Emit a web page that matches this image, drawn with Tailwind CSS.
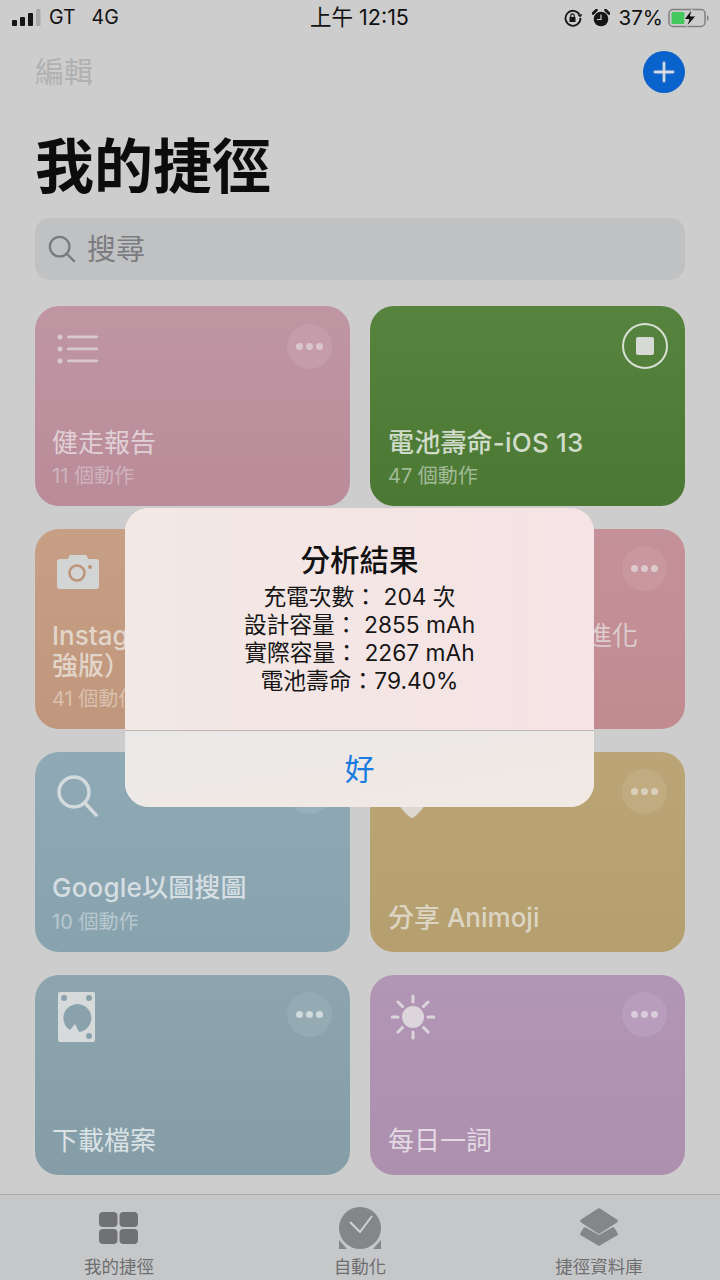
<!DOCTYPE html>
<html lang="zh-Hant">
<head>
<meta charset="utf-8">
<script src="https://cdn.jsdelivr.net/npm/@tailwindcss/browser@4"></script>
</head>
<body class="m-0">
<div class="relative w-[720px] h-[1280px] overflow-hidden bg-[#cdcdcd] font-['Inter','Noto_Sans_CJK_TC',sans-serif]">

  <!-- status bar -->
  <div class="h-[36px] grid grid-cols-3 items-center pl-[11px] pr-[10px] text-[#111] text-[19.5px] leading-none">
    <div class="flex items-center">
      <svg width="30" height="20" viewBox="0 0 30 20" fill="#151515"><rect x="1" y="12" width="5" height="6" rx="1"/><rect x="9" y="9" width="5" height="9" rx="1"/><rect x="17" y="5" width="5" height="13" rx="1"/><rect x="25" y="1" width="4.500" height="17" rx="1" fill="#a9a9a9"/></svg>
      <span class="ml-[8px]">GT</span><span class="ml-[16px]">4G</span>
    </div>
    <div class="text-center text-[21.5px] -translate-x-[1px]">上午 12:15</div>
    <div class="flex items-center justify-end">
      <svg width="19" height="18" viewBox="0 0 19 18" fill="none" stroke="#151515"><path d="M15.500 5.500A7.500 7.500 0 1 0 16.500 9" stroke-width="1.800"/><path d="M13.500 5.500h5l-2.500 3z" fill="#151515" stroke="none"/><rect x="5.500" y="8" width="6" height="5" fill="#151515" stroke="none"/><path d="M6.800 8V6.500a1.700 1.700 0 0 1 3.400 0V8" stroke-width="1.200"/></svg>
      <svg class="ml-[9px]" width="18" height="18" viewBox="0 0 18 18" fill="#151515"><circle cx="9" cy="10" r="7.300"/><path d="M1 4.500 4.500 1M13.500 1 17 4.500" stroke="#151515" stroke-width="2.600" stroke-linecap="round"/><path d="M9 5.500V10.500H5" stroke="#cdcdcd" stroke-width="1.200" fill="none"/></svg>
      <span class="ml-[9px] text-[20.5px]">37%</span>
      <svg class="ml-[5px]" width="42" height="20" viewBox="0 0 42 20" fill="none"><rect x="1" y="1.500" width="36" height="17" rx="4" stroke="#808080" stroke-width="1.500"/><rect x="3.500" y="4" width="13" height="12" rx="1.500" fill="#42c85c"/><path d="M39 7v6a3 3 0 0 0 1.500-3A3 3 0 0 0 39 7z" fill="#808080"/><path d="M24 1 16 11.500h5L18.500 19 28 8h-5.500z" fill="#111" stroke="#cdcdcd" stroke-width="1"/></svg>
    </div>
  </div>

  <!-- nav -->
  <div class="h-[72px] px-[35px] flex items-center justify-between">
    <span class="text-[29px] leading-none text-[#b1b1b1]">編輯</span>
    <div class="w-[42px] h-[42px] rounded-full bg-[#0a62cc] flex items-center justify-center">
      <svg width="22" height="22" viewBox="0 0 22 22" stroke="#d5d8dc" stroke-width="2.800" stroke-linecap="round"><path d="M11 2v18M2 11h18"/></svg>
    </div>
  </div>

  <!-- title -->
  <h1 class="mt-[24px] px-[35px] h-[70px] text-[59px] leading-[70px] font-bold text-[#0c0c0c]">我的捷徑</h1>

  <!-- search -->
  <div class="mx-[35px] mt-[16px] h-[62px] rounded-[15px] bg-[#c0c1c3] flex items-center pl-[13px]">
    <svg width="28" height="28" viewBox="0 0 30 30" fill="none" stroke="#7a7b7e" stroke-width="2.400" stroke-linecap="round"><circle cx="12.500" cy="12.500" r="10.500"/><path d="M20.500 20.500 28 28"/></svg>
    <span class="ml-[11px] text-[29px] text-[#7b7c7f] leading-none">搜尋</span>
  </div>

  <!-- grid -->
  <div class="mt-[26px] mx-[35px] grid grid-cols-[315px_315px] gap-x-[20px] gap-y-[23px]">

    <!-- card 1 -->
    <div class="relative h-[200px] rounded-[24px] bg-linear-to-b from-[#c096a3] to-[#ba8b99] pl-[22px] pt-[27px] text-[#e0d0d5]">
      <svg class="block" width="42" height="32" viewBox="0 0 42 32" fill="#d8c9ce"><circle cx="3" cy="4" r="2.500"/><circle cx="3" cy="16" r="2.500"/><circle cx="3" cy="28" r="2.500"/><rect x="10" y="2.500" width="31" height="2.800" rx="1.400"/><rect x="10" y="14.500" width="31" height="2.800" rx="1.400"/><rect x="10" y="26.500" width="31" height="2.800" rx="1.400"/></svg>
      <div class="absolute right-[18px] top-[18px] w-[45px] h-[45px] rounded-full bg-[#c59ca9] flex items-center justify-center gap-[3px]"><i class="w-[7px] h-[7px] rounded-full bg-[#d9c6cc]"></i><i class="w-[7px] h-[7px] rounded-full bg-[#d9c6cc]"></i><i class="w-[7px] h-[7px] rounded-full bg-[#d9c6cc]"></i></div>
      <div class="absolute left-[17px] bottom-[16px]">
        <div class="text-[26px] leading-[34px] mb-[2px]">健走報告</div>
        <div class="text-[20px] leading-[28px] text-[#cfb3bc]">11 個動作</div>
      </div>
    </div>

    <!-- card 2 -->
    <div class="relative h-[200px] rounded-[24px] bg-linear-to-b from-[#56843f] to-[#4b7934] text-[#d0dbc9]">
      <div class="absolute right-[17px] top-[17px] w-[46px] h-[46px] rounded-full border-2 border-[#d8dfd3] flex items-center justify-center"><i class="w-[18px] h-[18px] rounded-[2px] bg-[#d6d9d4]"></i></div>
      <div class="absolute left-[18px] bottom-[16px]">
        <div class="text-[26px] leading-[34px] mb-[2px] font-medium whitespace-nowrap tracking-[0.2px]">電池壽命-iOS 13</div>
        <div class="text-[20px] leading-[28px] text-[#a3ba96]">47 個動作</div>
      </div>
    </div>

    <!-- card 3 -->
    <div class="relative h-[200px] rounded-[24px] bg-linear-to-b from-[#c79f84] to-[#c0977c] pl-[22px] pt-[26px] text-[#e2d5ca]">
      <svg class="block" width="42" height="34" viewBox="0 0 42 34"><path d="M3 4h8l1.500-4h17L31 4h8a3 3 0 0 1 3 3v24a3 3 0 0 1-3 3H3a3 3 0 0 1-3-3V7a3 3 0 0 1 3-3z" fill="#d3d4d4"/><circle cx="20" cy="18" r="7.500" fill="none" stroke="#bd9379" stroke-width="2.500"/><circle cx="33" cy="12" r="2" fill="#bd9379"/></svg>
      <div class="absolute left-[17px] bottom-[16px] w-[280px]">
        <div class="text-[26px] leading-[30px] font-medium mb-[4px]">Instag<br>強版）</div>
        <div class="text-[20px] leading-[28px] text-[#d9c0ae]">41 個動作</div>
      </div>
    </div>

    <!-- card 4 -->
    <div class="relative h-[200px] rounded-[24px] bg-linear-to-b from-[#c59198] to-[#c18b90] text-[#dccdce]">
      <div class="absolute right-[18px] top-[17px] w-[45px] h-[45px] rounded-full bg-[#c9979e] flex items-center justify-center gap-[3px]"><i class="w-[7px] h-[7px] rounded-full bg-[#dcc9cb]"></i><i class="w-[7px] h-[7px] rounded-full bg-[#dcc9cb]"></i><i class="w-[7px] h-[7px] rounded-full bg-[#dcc9cb]"></i></div>
      <div class="absolute right-[47px] top-[90px] text-[26px] leading-[34px]">進化</div>
    </div>

    <!-- card 5 -->
    <div class="relative h-[200px] rounded-[24px] bg-linear-to-b from-[#8fa9b5] to-[#88a3ae] pl-[22px] pt-[23px] text-[#d5dee2]">
      <svg class="block" width="42" height="42" viewBox="0 0 42 42" fill="none" stroke="#d3dadd" stroke-width="3.500" stroke-linecap="round"><circle cx="17" cy="17" r="15"/><path d="M28 28 39 40"/></svg>
      <div class="absolute right-[18px] top-[17px] w-[45px] h-[45px] rounded-full bg-[#98b0bb]"></div>
      <div class="absolute left-[17px] bottom-[16px]">
        <div class="text-[26px] leading-[34px] mb-[3px] font-medium whitespace-nowrap tracking-[0.2px]">Google以圖搜圖</div>
        <div class="text-[20px] leading-[28px] text-[#b8c8cf]">10 個動作</div>
      </div>
    </div>

    <!-- card 6 -->
    <div class="relative h-[200px] rounded-[24px] bg-linear-to-b from-[#bba576] to-[#b69f6f] text-[#dcd5c3]">
      <div class="absolute right-[18px] top-[17px] w-[45px] h-[45px] rounded-full bg-[#c1ab81] flex items-center justify-center gap-[3px]"><i class="w-[7px] h-[7px] rounded-full bg-[#d9d0bc]"></i><i class="w-[7px] h-[7px] rounded-full bg-[#d9d0bc]"></i><i class="w-[7px] h-[7px] rounded-full bg-[#d9d0bc]"></i></div>
      <svg class="absolute left-[29px] top-[53px]" width="26" height="13" viewBox="0 0 26 13" fill="#dcd8d0"><path d="M0 0h26C22 6 16 12 13 13 10 12 4 6 0 0z"/></svg>
      <div class="absolute left-[18px] bottom-[16px] mb-[1px] text-[26px] leading-[34px] font-medium">分享 Animoji</div>
    </div>

    <!-- card 7 -->
    <div class="relative h-[200px] rounded-[24px] bg-linear-to-b from-[#8ca5ae] to-[#859da7] pl-[23px] pt-[17px] text-[#dbe2e5]">
      <svg class="block" width="37" height="50" viewBox="0 0 37 50"><rect width="37" height="50" rx="2" fill="#d7dadb"/><circle cx="6" cy="6" r="3" fill="#8aa2ab"/><circle cx="31" cy="6" r="3" fill="#8aa2ab"/><circle cx="31" cy="44" r="3" fill="#8aa2ab"/><path d="M17 32 12 38A14 14 0 1 1 21 40z" fill="#8aa2ab"/></svg>
      <div class="absolute right-[18px] top-[17px] w-[45px] h-[45px] rounded-full bg-[#94abb4] flex items-center justify-center gap-[3px]"><i class="w-[7px] h-[7px] rounded-full bg-[#d0d9dc]"></i><i class="w-[7px] h-[7px] rounded-full bg-[#d0d9dc]"></i><i class="w-[7px] h-[7px] rounded-full bg-[#d0d9dc]"></i></div>
      <div class="absolute left-[17px] bottom-[17px] text-[26px] leading-[34px]">下載檔案</div>
    </div>

    <!-- card 8 -->
    <div class="relative h-[200px] rounded-[24px] bg-linear-to-b from-[#b296b5] to-[#ad8fae] pl-[21px] pt-[19px] text-[#e3dae4]">
      <svg class="block" width="44" height="46" viewBox="0 0 44 46" stroke="#dcd5dc" stroke-width="3" stroke-linecap="round" fill="#dcd5dc"><circle cx="22" cy="23" r="11" stroke="none"/><path d="M22 2v6M22 38v6M1 23h6M37 23h6M7 8l4.500 4.500M37 8l-4.500 4.500M7 38l4.500-4.500M37 38l-4.500-4.500"/></svg>
      <div class="absolute right-[18px] top-[17px] w-[45px] h-[45px] rounded-full bg-[#b89dbd] flex items-center justify-center gap-[3px]"><i class="w-[7px] h-[7px] rounded-full bg-[#d9cdda]"></i><i class="w-[7px] h-[7px] rounded-full bg-[#d9cdda]"></i><i class="w-[7px] h-[7px] rounded-full bg-[#d9cdda]"></i></div>
      <div class="absolute left-[18px] bottom-[17px] text-[26px] leading-[34px]">每日一詞</div>
    </div>
  </div>

  <!-- tab bar -->
  <div class="absolute left-0 right-0 bottom-0 h-[86px] border-t border-[#a9a9a9] bg-[#c6c7c8] grid grid-cols-3 text-[#6d6e70] text-[17.5px] leading-none">
    <div class="flex flex-col items-center -translate-x-[1px] pt-[17px]">
      <svg class="block" width="40" height="33" viewBox="0 0 40 33" fill="#707174"><rect width="18.500" height="15" rx="4"/><rect x="20.500" width="18.500" height="15" rx="4"/><rect y="17" width="18.500" height="15" rx="4"/><rect x="20.500" y="17" width="18.500" height="15" rx="4"/></svg>
      <span class="mt-[13px]">我的捷徑</span>
    </div>
    <div class="flex flex-col items-center pt-[12px]">
      <svg class="block" width="42" height="42" viewBox="0 0 42 42"><circle cx="21" cy="21" r="21" fill="#858688"/><path d="M11 15 21 25 33 9" fill="none" stroke="#d0d1d2" stroke-width="2"/><path d="M0 33v9h8zM42 33v9h-8z" fill="#858688"/></svg>
      <span class="mt-[9px]">自動化</span>
    </div>
    <div class="flex flex-col items-center pt-[13px] -translate-x-[1px]">
      <svg class="block" width="40" height="38" viewBox="0 0 40 38" fill="#858688" stroke="#858688" stroke-width="3.500" stroke-linejoin="round"><path d="M20 2 37 13 20 24 3 13z"/><path d="M6 21 20 29 34 21 37 26 20 36 3 26z"/></svg>
      <span class="mt-[12px]">捷徑資料庫</span>
    </div>
  </div>

  <!-- alert -->
  <div class="absolute left-[125px] top-[508px] w-[469px] h-[299px] rounded-[24px] overflow-hidden text-center flex flex-col bg-[#f0e8e6]">
    <div class="h-[223px] border-b border-[#bdb6b4] pt-[33px] bg-linear-to-r from-[#f2e8e4] to-[#f6e3e5]">
      <div class="text-[29.5px] leading-[38px] font-medium text-[#111]">分析結果</div>
      <div class="mt-[4px] text-[22.75px] leading-[28px] text-[#161616]">
        <div>充電次數： 204 次</div>
        <div>設計容量： 2855 mAh</div>
        <div>實際容量： 2267 mAh</div>
        <div>電池壽命：79.40%</div>
      </div>
    </div>
    <div class="flex-1 flex items-center justify-center text-[30px] leading-none text-[#1a7be0] bg-linear-to-br from-[#eae9e8] to-[#f2e9e3]">好</div>
  </div>

</div>
</body>
</html>
